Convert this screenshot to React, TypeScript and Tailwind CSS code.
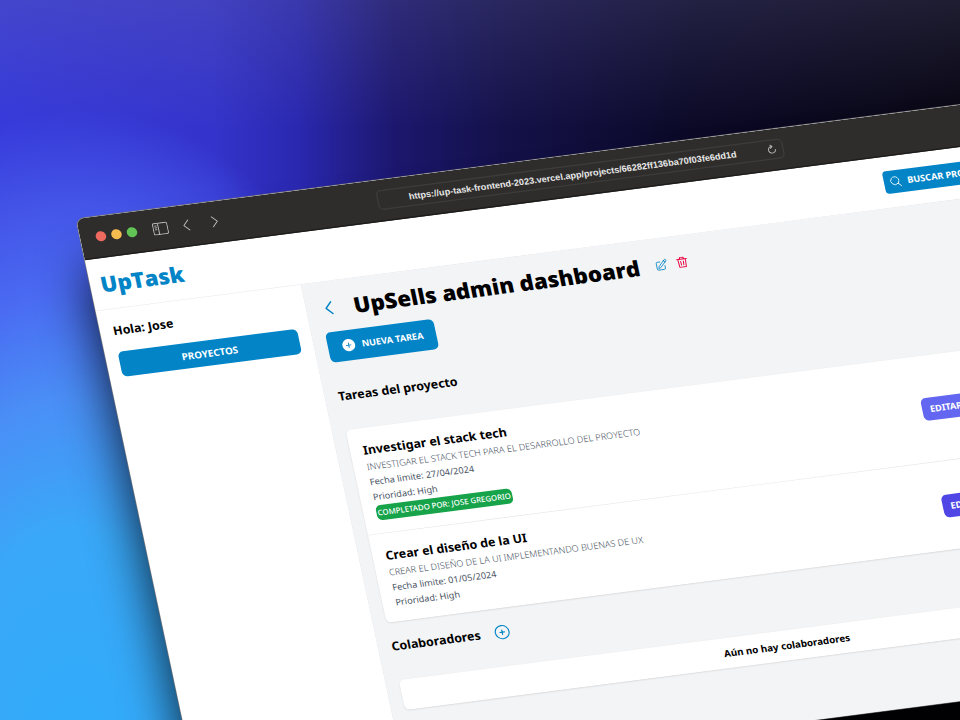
import React from "react";

type Task = {
  title: string;
  description: string;
  due: string;
  priority: string;
  completedBy?: string;
};

const tasks: Task[] = [
  {
    title: "Investigar el stack tech",
    description: "Investigar el stack tech para el desarrollo del proyecto",
    due: "27/04/2024",
    priority: "High",
    completedBy: "Jose Gregorio",
  },
  {
    title: "Crear el diseño de la UI",
    description: "Crear el diseño de la UI implementando buenas de UX",
    due: "01/05/2024",
    priority: "High",
  },
];

function Chevron({ flip = false, className }: { flip?: boolean; className: string }) {
  return (
    <svg viewBox="0 0 24 24" fill="none" stroke="currentColor" strokeLinecap="round" strokeLinejoin="round" className={className} aria-hidden="true">
      <path d={flip ? "m8.25 4 7.5 8-7.5 8" : "M15.75 20 8.25 12l7.5-8"} />
    </svg>
  );
}

function Chrome() {
  return (
    <div className="flex h-[66px] items-center border-b-2 border-[#1d1c1b] bg-[#2e2d2b] px-6 text-[#b9b8b6]">
      <div className="flex w-[435px] items-center">
        <div className="flex gap-2">
          <span className="size-4 rounded-full bg-[#ee6a5f]" />
          <span className="size-4 rounded-full bg-[#f5bd4f]" />
          <span className="size-4 rounded-full bg-[#61c454]" />
        </div>
        <button type="button" aria-label="Barra lateral" className="ml-6">
          <svg viewBox="0 0 24 20" fill="none" stroke="currentColor" strokeWidth="1.5" className="h-5 w-6">
            <rect x="1" y="1" width="22" height="18" rx="2" />
            <path d="M9 1v18M3.5 5H7M3.5 8H7M3.5 11H7" />
          </svg>
        </button>
        <button type="button" aria-label="Atrás" className="ml-4">
          <Chevron className="size-6 stroke-[1.5]" />
        </button>
        <button type="button" aria-label="Adelante" className="ml-5">
          <Chevron flip className="size-6 stroke-[1.5]" />
        </button>
      </div>
      <div className="flex h-8 w-[628px] items-center rounded-lg border-2 border-[#3d3c3a] pr-2">
        <input
          aria-label="Dirección"
          readOnly
          defaultValue="https://up-task-frontend-2023.vercel.app/projects/66282ff136ba70f03fe6dd1d"
          className="min-w-0 flex-1 bg-transparent text-center font-['Liberation_Sans',sans-serif] text-[14px] font-bold text-[#e8e8e8] outline-none"
        />
        <button type="button" aria-label="Recargar">
          <svg viewBox="0 0 24 24" fill="none" stroke="currentColor" strokeWidth="2.2" strokeLinecap="round" strokeLinejoin="round" className="size-4">
            <path d="M5.5 8A8 8 0 1 0 20 13M5.500 8A8 8 0 0 1 13 5M9.500 1l4 4-4 4" />
          </svg>
        </button>
      </div>
    </div>
  );
}

function TaskRow({ task }: { task: Task }) {
  return (
    <li className="flex items-center justify-between border-b border-gray-200 px-5 pt-5 pb-[18px] last:border-b-0">
      <div>
        <h3 className="text-[19px] leading-[30px] font-bold">{task.title}</h3>
        <p className="text-sm leading-6 font-light text-gray-600 uppercase">{task.description}</p>
        <p className="text-sm leading-6 text-gray-600">Fecha limite: {task.due}</p>
        <p className="text-sm leading-6 text-gray-600">Prioridad: {task.priority}</p>
        {task.completedBy && (
          <p className="mt-0.5 mb-0.5 w-fit rounded-lg bg-[#16a34a] px-0.5 py-1 text-xs font-medium text-white uppercase">
            Completado por: {task.completedBy}
          </p>
        )}
      </div>
      <div className="w-[296px]">
        <button
          type="button"
          className={
            task.completedBy
              ? "rounded-lg bg-[#6366f1] px-3 py-2 text-sm font-bold text-white uppercase"
              : "rounded-lg bg-[#4f46e5] px-3 py-2 text-sm font-bold text-white uppercase"
          }
        >
          Editar
        </button>
      </div>
    </li>
  );
}

export default function App() {
  return (
    <div className="relative h-screen overflow-hidden bg-[radial-gradient(ellipse_40%_90%_at_8%_105%,#30acfb_0%,#3aa8f8_35%,#4a8ff6_55%,#4a6af2_72%,#4455e8_85%,transparent_100%),linear-gradient(to_bottom,rgba(110,110,160,0.24)_0%,transparent_18%),linear-gradient(to_right,#3639da_0%,#3434cc_22%,#2a28b0_31%,#1c176e_41%,#14114a_52%,#0b0926_72%,#06040f_100%)] font-['Noto_Sans',sans-serif] text-black">
      <div className="absolute top-0 left-0 w-[1548px] origin-top-left overflow-hidden rounded-xl bg-white shadow-[0_80px_80px_0px_rgba(0,0,0,0.85)] ring-1 ring-[#77767a] [transform:matrix(0.647,-0.0837,0.1325,0.6235,76,219)]">
        <Chrome />
        <header className="flex h-[82px] items-center justify-between border-b border-gray-200 px-4">
          <h2 className="font-['Open_Sans','Noto_Sans',sans-serif] text-[34px] leading-10 font-black text-[#0284c7]">UpTask</h2>
          <div className="w-[305px]">
            <button type="button" className="flex items-center gap-2 rounded-md bg-[#0284c7] px-2 py-2 text-sm font-bold text-white uppercase">
              <svg viewBox="0 0 24 24" fill="none" stroke="currentColor" strokeWidth="1.5" strokeLinecap="round" className="size-5" aria-hidden="true">
                <path d="m21 21-5.2-5.2m0 0A7.5 7.5 0 1 0 5.2 5.2a7.5 7.5 0 0 0 10.6 10.6Z" />
              </svg>
              Buscar proyecto
            </button>
          </div>
        </header>
        <div className="flex h-[783px]">
          <aside className="w-[318px] border-r border-gray-200 p-5">
            <p className="text-[19px] leading-7 font-bold">Hola: Jose</p>
            <a href="#proyectos" className="mt-5 block rounded-lg bg-[#0284c7] p-2 text-center text-[15px] leading-6 font-bold text-white uppercase">
              Proyectos
            </a>
          </aside>
          <main className="flex-1 bg-gray-100 px-5 py-4">
            <div className="flex h-13 items-center">
              <button type="button" aria-label="Volver" className="text-[#0284c7]">
                <Chevron className="size-7 stroke-2" />
              </button>
              <h1 className="ml-6 font-['Open_Sans','Noto_Sans',sans-serif] text-[34px] leading-10 font-black">UpSells admin dashboard</h1>
              <button type="button" aria-label="Editar proyecto" className="ml-6 text-[#0284c7]">
                <svg viewBox="0 0 24 24" fill="none" stroke="currentColor" strokeWidth="1.5" strokeLinecap="round" strokeLinejoin="round" className="size-5">
                  <path d="m16.862 4.487 1.687-1.688a1.875 1.875 0 1 1 2.652 2.652L10.582 16.07a4.5 4.5 0 0 1-1.897 1.13L6 18l.8-2.685a4.5 4.5 0 0 1 1.13-1.897l8.932-8.931Zm0 0L19.5 7.125M18 14v4.75A2.25 2.25 0 0 1 15.75 21H5.25A2.25 2.25 0 0 1 3 18.75V8.25A2.25 2.25 0 0 1 5.25 6H10" />
                </svg>
              </button>
              <button type="button" aria-label="Eliminar proyecto" className="ml-3 text-rose-600">
                <svg viewBox="0 0 24 24" fill="none" stroke="currentColor" strokeWidth="1.8" strokeLinecap="round" strokeLinejoin="round" className="size-5">
                  <path d="M3 6h18M5 6l1 15h12l1-15M8.5 6V2.5h7V6M9.5 10l.4 7M14.5 10l-.4 7" />
                </svg>
              </button>
            </div>
            <button type="button" className="mt-3 flex items-center gap-2 rounded-lg bg-[#0284c7] px-5 py-3 text-sm font-bold text-white uppercase">
              <svg viewBox="0 0 24 24" className="size-6" aria-hidden="true">
                <circle cx="12" cy="12" r="9.75" fill="white" />
                <path d="M12 8.5v7M8.5 12h7" stroke="#0284c7" strokeWidth="1.5" strokeLinecap="round" />
              </svg>
              Nueva tarea
            </button>
            <h2 className="mt-10 text-[19px] leading-7 font-bold">Tareas del proyecto</h2>
            <ul className="mt-10 rounded-lg bg-white shadow">
              {tasks.map((task) => (
                <TaskRow key={task.title} task={task} />
              ))}
            </ul>
            <div className="mt-6 flex items-center gap-5">
              <h2 className="text-[19px] leading-7 font-bold">Colaboradores</h2>
              <button type="button" aria-label="Añadir colaborador" className="text-[#0284c7]">
                <svg viewBox="0 0 24 24" fill="none" stroke="currentColor" strokeWidth="1.5" strokeLinecap="round" className="size-7">
                  <path d="M12 9v6m3-3H9m12 0a9 9 0 1 1-18 0 9 9 0 0 1 18 0Z" />
                </svg>
              </button>
            </div>
            <p className="mt-10 rounded-lg bg-white p-3 text-center text-[15px] leading-6 font-bold shadow">Aún no hay colaboradores</p>
          </main>
        </div>
      </div>
    </div>
  );
}
